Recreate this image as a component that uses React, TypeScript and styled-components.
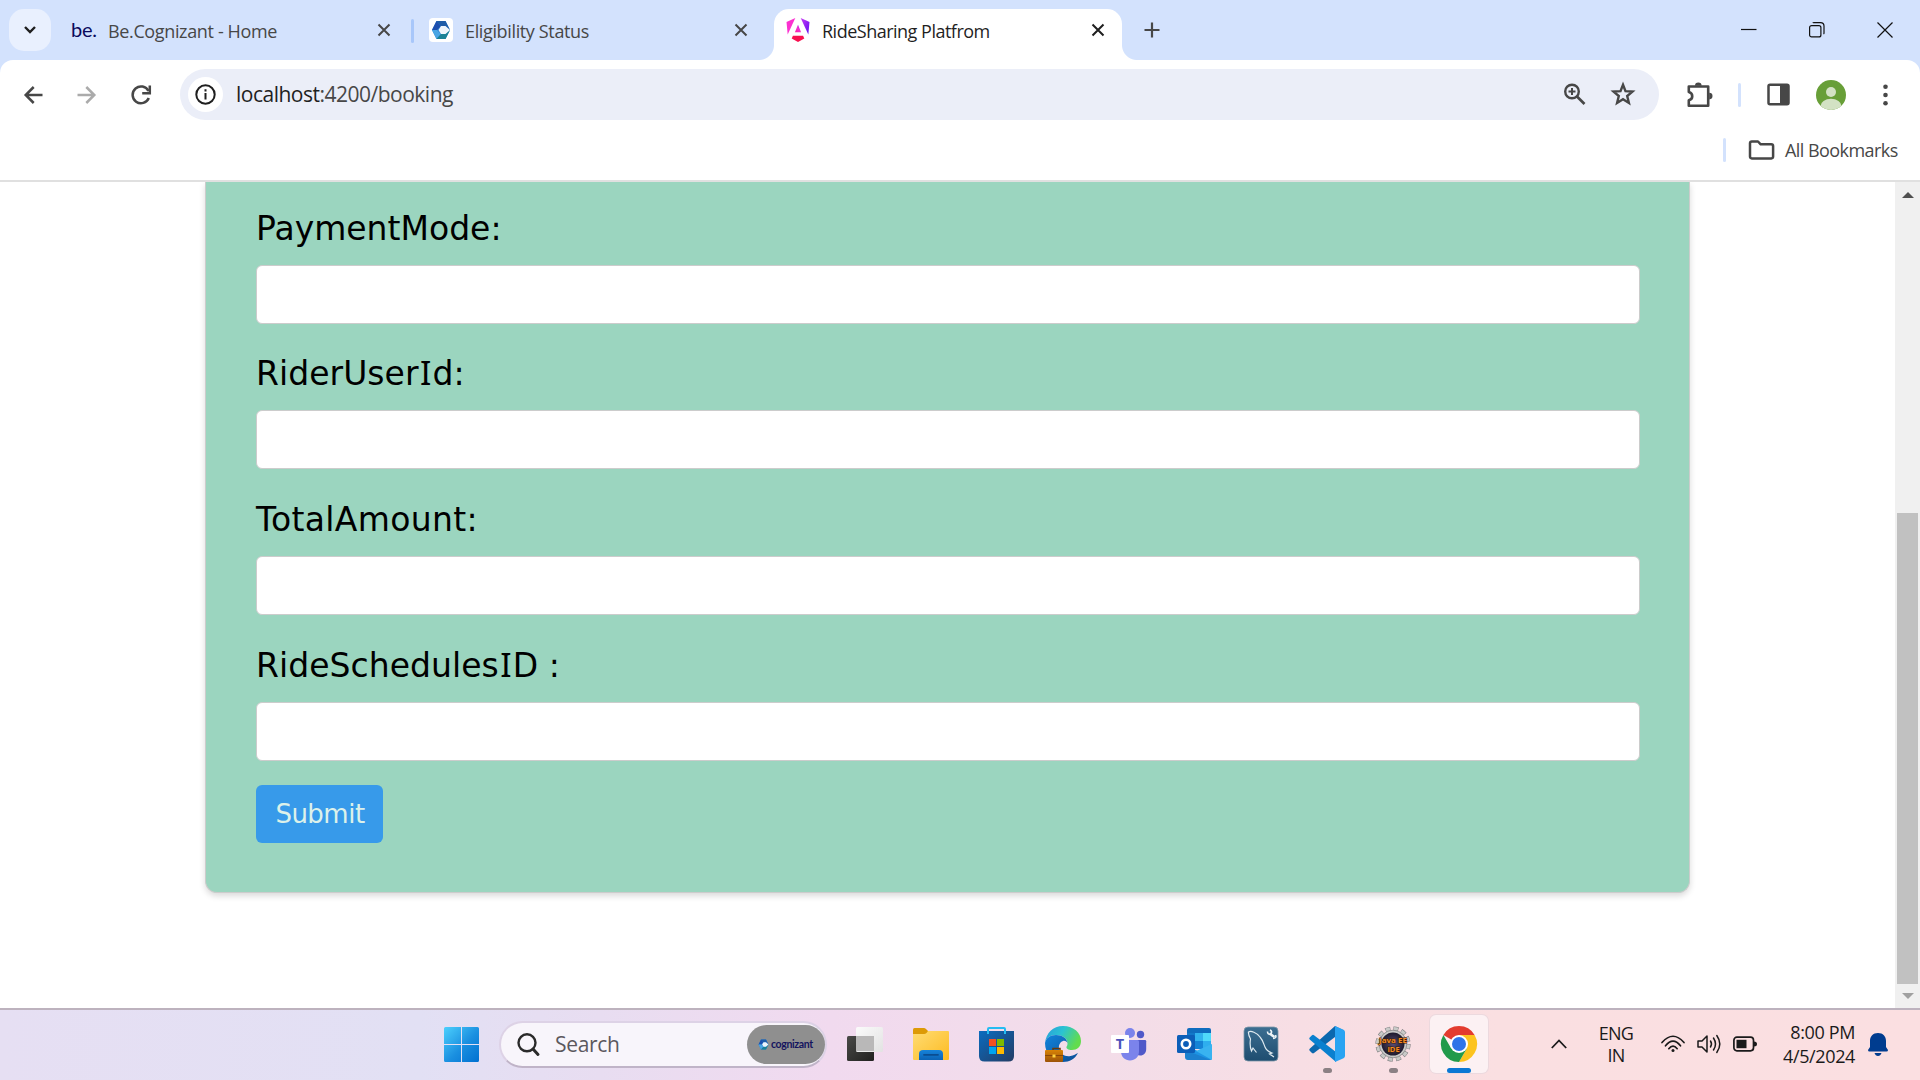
import React from "react";
import styled, { createGlobalStyle } from "styled-components";

const uiFont = `"Open Sans", "Noto Sans", sans-serif`;

const GlobalStyle = createGlobalStyle`
  * { box-sizing: border-box; }
  html, body { margin: 0; padding: 0; overflow: hidden; background: #fff; }
  svg { display: block; flex: none; overflow: visible; }
`;

const Screen = styled.div`
  width: 1920px;
  height: 1080px;
  display: flex;
  flex-direction: column;
  overflow: hidden;
  font-family: ${uiFont};
  background: #fff;
`;

/* ---------- Browser frame ---------- */

const TabStrip = styled.header`
  height: 60px;
  flex: none;
  display: flex;
  align-items: flex-start;
  padding: 9px 27px 0 9px;
  background: #d3e2fd;
`;

const TabSearch = styled.div`
  width: 42px;
  height: 42px;
  border-radius: 15px;
  background: #e9f0fe;
  display: grid;
  place-items: center;
`;

const Tab = styled.div<{ $width: number; $active?: boolean; $pad: number; $end: number }>`
  position: relative;
  width: ${(p) => p.$width}px;
  height: 51px;
  padding: 0 ${(p) => p.$end}px 9px ${(p) => p.$pad}px;
  display: flex;
  align-items: center;
  border-radius: 15px 15px 0 0;
  background: ${(p) => (p.$active ? "#fff" : "transparent")};
  color: ${(p) => (p.$active ? "#1f1f1f" : "#474747")};

  &::before,
  &::after {
    content: "";
    display: ${(p) => (p.$active ? "block" : "none")};
    position: absolute;
    bottom: 0;
    width: 15px;
    height: 15px;
  }
  &::before {
    left: -15px;
    background: radial-gradient(circle at 0 0, transparent 14.5px, #fff 15.5px);
  }
  &::after {
    right: -15px;
    background: radial-gradient(circle at 100% 0, transparent 14.5px, #fff 15.5px);
  }
`;

const TabTitle = styled.span<{ $gap: number; $track: number }>`
  flex: 1;
  margin-left: ${(p) => p.$gap}px;
  padding-top: 1px;
  font-size: 18px;
  line-height: 24px;
  letter-spacing: ${(p) => p.$track}px;
  white-space: nowrap;
`;

const BeMark = styled.span`
  width: 26px;
  margin-top: -2px;
  font-family: Lato, sans-serif;
  font-size: 20px;
  line-height: 24px;
  color: #0a0a5c;
  letter-spacing: -0.2px;
`;

const Favicon = styled.span`
  width: 24px;
  height: 24px;
  border-radius: 4px;
  background: #fff;
  display: grid;
  place-items: center;
`;

const Divider = styled.i<{ $color?: string }>`
  flex: none;
  width: 3px;
  height: 24px;
  border-radius: 2px;
  background: ${(p) => p.$color ?? "#d3e2fd"};
`;

const TabDivider = styled(Divider)`
  margin-top: 10px;
`;

const NewTab = styled.div`
  margin: 13px 0 0 22px;
`;

const WindowControls = styled.div`
  margin: 12px 0 0 auto;
  display: flex;
  gap: 52px;
  padding-top: 1px;
`;

const ToolbarWrap = styled.div`
  flex: none;
  background: #d3e2fd;
`;

const Toolbar = styled.div`
  height: 69px;
  border-radius: 13px 13px 0 0;
  background: #fff;
  display: flex;
  align-items: center;
  padding: 0 21px 0 21px;
`;

const NavButtons = styled.div`
  display: flex;
  gap: 30px;
  width: 159px;
`;

const AddressBar = styled.div`
  width: 1479px;
  height: 51px;
  border-radius: 26px;
  background: #ebeef8;
  display: flex;
  align-items: center;
  padding: 0 24px 0 8px;
`;

const InfoBadge = styled.span`
  width: 35px;
  height: 35px;
  border-radius: 50%;
  background: #fff;
  display: grid;
  place-items: center;
`;

const Url = styled.span`
  flex: 1;
  margin-left: 13px;
  margin-top: -1px;
  font-size: 21px;
  line-height: 30px;
  letter-spacing: -0.5px;
  color: #474747;
  b { font-weight: 400; color: #1f1f1f; }
`;

const AddressActions = styled.div`
  display: flex;
  align-items: center;
  gap: 25px;
  padding-bottom: 1px;
`;

const ToolbarActions = styled.div`
  flex: 1;
  display: flex;
  align-items: center;
  margin-left: 28px;
  gap: 26px;
`;

const MenuSlot = styled.span`
  margin-left: 11px;
`;

const BookmarkBar = styled.div`
  flex: none;
  height: 53px;
  border-bottom: 2px solid #e0e0e0;
  display: flex;
  align-items: center;
  justify-content: flex-end;
  padding: 0 21px 9px 0;
`;

const BookmarkLabel = styled.span`
  width: 114px;
  margin-left: 10px;
  font-size: 18px;
  line-height: 24px;
  letter-spacing: -0.55px;
  color: #474747;
  white-space: nowrap;
`;

const FolderSlot = styled.span`
  margin-left: 22px;
`;

/* ---------- Page ---------- */

const Viewport = styled.main`
  flex: none;
  height: 826px;
  display: flex;
  overflow: hidden;
`;

const Page = styled.div`
  flex: 1;
  padding: 0 205px;
  overflow: hidden;
`;

const FormCard = styled.form`
  height: 711px;
  padding: 22.8px 49px 0 50px;
  border: 1px solid #ccc;
  border-top: 0;
  border-radius: 0 0 12px 12px;
  background: #9bd5bf;
  box-shadow: 0 3px 6px rgba(0, 0, 0, 0.15);
`;

const Field = styled.label`
  display: block;
  height: 145.67px;
`;

const FieldLabel = styled.span<{ $track: number }>`
  display: block;
  height: 60px;
  padding-top: 1px;
  font-family: "DejaVu Sans", sans-serif;
  font-size: 33px;
  line-height: 46px;
  letter-spacing: ${(p) => p.$track}px;
  white-space: pre;
  color: #000;
`;

const SerifCapital = styled.span`
  padding: 0 1.3px;
  font-family: "Noto Sans", sans-serif;
  line-height: 1;
  font-size: 33.5px;
`;

const Input = styled.input`
  display: block;
  width: 100%;
  height: 59px;
  border: 1px solid #ccc;
  border-radius: 6px;
  background: #fff;
  outline: none;
`;

const Submit = styled.button`
  display: block;
  width: 127px;
  height: 58px;
  margin-top: -2.6px;
  padding: 0 0 0 1px;
  border: 0;
  border-radius: 6px;
  background: #379aea;
  color: #dcf1ea;
  font-family: "DejaVu Sans", sans-serif;
  font-size: 26px;
  letter-spacing: -0.5px;
`;

const Scrollbar = styled.aside`
  width: 25px;
  background: #f0f0f0;
  display: flex;
  flex-direction: column;
  align-items: center;
  padding: 10px 0 9px;
`;

const Thumb = styled.div`
  width: 21px;
  height: 471px;
  margin: 315px 0 9px;
  background: #c1c1c1;
`;

/* ---------- Taskbar ---------- */

const Taskbar = styled.footer`
  flex: none;
  height: 72px;
  border-top: 2px solid #bdb2be;
  display: flex;
  align-items: center;
  padding: 0 0 2px 444px;
  background: linear-gradient(90deg, #e6dff3 0, #e2e0f4 420px, #e8ddf1 600px, #f1daef 830px, #f3dde9 1100px, #f7dee4 1300px, #fadfe1 1500px, #fbdfe1 1920px);
`;

const SearchBox = styled.div`
  width: 328px;
  height: 47px;
  margin-left: 20px;
  margin-right: 5px;
  border: 2px solid #ddd2e6;
  border-bottom-color: #c0b4c8;
  border-radius: 24px;
  background: #f8f5fb;
  display: flex;
  align-items: center;
  padding: 0 0 0 16px;
`;

const SearchText = styled.span`
  flex: 1;
  margin-left: 16px;
  font-size: 21px;
  line-height: 30px;
  letter-spacing: -0.3px;
  color: #5b585e;
`;

const BrandPill = styled.div`
  width: 78px;
  height: 39px;
  border-radius: 20px;
  background: #8f8f8f;
  display: flex;
  align-items: center;
  padding-left: 11px;
  gap: 2px;
  font-family: Lato, sans-serif;
  font-size: 10.5px;
  font-weight: 700;
  line-height: 12px;
  letter-spacing: -0.35px;
  color: #14145e;
`;

const AppCell = styled.div`
  width: 66px;
  height: 68px;
  display: flex;
  flex-direction: column;
  align-items: center;
  padding-top: 5px;
`;

const AppTile = styled.div<{ $active?: boolean }>`
  width: 58px;
  height: 58px;
  flex: none;
  border-radius: 6px;
  display: grid;
  place-items: center;
  background: ${(p) => (p.$active ? "#fcf1f3" : "transparent")};
  box-shadow: ${(p) => (p.$active ? "0 0 0 1px #ecd9de" : "none")};
`;

const Indicator = styled.i<{ $active?: boolean }>`
  z-index: 1;
  width: ${(p) => (p.$active ? 24 : 9)}px;
  height: 5px;
  flex: none;
  margin-top: -5px;
  border-radius: 3px;
  background: ${(p) => (p.$active ? "#0a78d4" : "#8b8084")};
`;

const Tray = styled.div`
  flex: 1;
  display: flex;
  align-items: center;
  padding-left: 59px;
  color: #1a1a1a;
  font-size: 18px;
  line-height: 24px;
`;

const Language = styled.div`
  width: 50px;
  margin-left: 24px;
  text-align: center;
  line-height: 22px;
  letter-spacing: -0.7px;
`;

const StatusIcons = styled.div`
  margin-left: 20px;
  display: flex;
  align-items: center;
  gap: 12px;
`;

const Clock = styled.div`
  width: 98px;
  text-align: right;
  letter-spacing: -0.38px;
  white-space: nowrap;
`;

const BellSlot = styled.div`
  margin-left: 13px;
`;

/* ---------- Icons ---------- */

const CloseIcon = ({ color = "#474747" }: { color?: string }) => (
  <svg width="12" height="12" viewBox="0 0 12 12" stroke={color} strokeWidth="2">
    <path d="M0.5 0.5 11.5 11.5M11.5 0.5 0.5 11.5" />
  </svg>
);

const HexLogo = ({ size = 20 }: { size?: number }) => (
  <svg width={size} height={size} viewBox="0 0 20 20">
    <path d="M5.500 1h9L19 10l-4.500 9h-9L1 10z" fill="#2a7fd0" />
    <path d="M5.500 1 1 10h5l4-4z" fill="#1d4fae" />
    <path d="M1 10l4.500 9L10 14l-4-4z" fill="#4aa6e4" />
    <path d="M5.500 1h9L19 10l-5-4h-4z" fill="#1f5da8" />
    <path d="M5.500 19h9L19 10l-5 4h-4z" fill="#1a8296" />
    <path d="M10 6h4.500l4.500 4-4.500 4H10l-2.500-4z" fill="#fff" fillOpacity=".92" />
  </svg>
);

const AngularIcon = () => (
  <svg width="24" height="24" viewBox="0 0 24 24">
    <defs>
      <linearGradient id="ngA" x1="0" y1="1" x2="1" y2="0">
        <stop offset="0" stopColor="#fb1e9d" />
        <stop offset=".5" stopColor="#f62fd0" />
        <stop offset="1" stopColor="#7a12f5" />
      </linearGradient>
      <linearGradient id="ngB" x1="0" y1="0" x2="1" y2="1">
        <stop offset="0" stopColor="#c83cf5" />
        <stop offset="1" stopColor="#5d0cf0" />
      </linearGradient>
    </defs>
    <path d="M9.3 0 .5 3.9 1.7 16.5z" fill="#fb30d0" />
    <path d="M14.7 0 23.5 3.9 22.3 16.5z" fill="url(#ngB)" />
    <path d="M12 6.8 8.9 14.3H15.1z" fill="url(#ngA)" />
    <path d="M6.9 17.8h10.2l1.2 2.8L12 24l-6.3-3.4z" fill="#f8104f" />
  </svg>
);

const BackIcon = ({ color, flip }: { color: string; flip?: boolean }) => (
  <svg width="24" height="24" viewBox="0 0 24 24" fill="none" stroke={color} strokeWidth="2.5">
    <path transform={flip ? "translate(24 0) scale(-1 1)" : undefined} d="M21.5 12H5M12.7 4 4.7 12l8 8" />
  </svg>
);

const ReloadIcon = () => (
  <svg width="24" height="24" viewBox="0 0 24 24" fill="none" stroke="#474747" strokeWidth="2.5">
    <path d="M19.8 15A8.4 8.4 0 1 1 19.5 8" />
    <path d="M20.8 2.5v7.7h-7.6" />
  </svg>
);

const InfoIcon = () => (
  <svg width="21" height="21" viewBox="0 0 21 21" fill="none" stroke="#1f1f1f" strokeWidth="2">
    <circle cx="10.5" cy="10.5" r="9.2" />
    <path d="M10.5 9v6.5M10.5 5.3v2.2" />
  </svg>
);

const ZoomIcon = () => (
  <svg width="23" height="23" viewBox="0 0 23 23" fill="none" stroke="#474747" strokeWidth="2.4">
    <circle cx="9" cy="8.5" r="6.8" />
    <path d="M14 13.5l7.5 7.5" strokeWidth="2.7" />
    <path d="M9 5v7M5.5 8.5h7" strokeWidth="2" />
  </svg>
);

const StarIcon = () => (
  <svg width="24" height="24" viewBox="0 0 24 24" fill="none" stroke="#474747" strokeWidth="2.4">
    <path d="M12 2.8l2.5 6.3 7 .5-5.3 4.4 1.7 6.9L12 17.2l-5.9 3.7 1.7-6.9L2.5 9.6l7-.5z" />
  </svg>
);

const PuzzleIcon = () => (
  <svg width="25" height="26" viewBox="0 0 25 26" fill="none" stroke="#474747" strokeWidth="2.6" strokeLinejoin="round">
    <path d="M1.800 4.500h19.400v19.200H1.800V18.300c4.600-1.200 4.600-7 0-8.200z" />
    <path d="M8 3.700a3.300 3.300 0 0 1 6.600 0zM22.200 10.800a3.300 3.300 0 0 1 0 6.600z" fill="#474747" stroke="none" />
  </svg>
);

const PanelIcon = () => (
  <svg width="23" height="23" viewBox="0 0 23 23">
    <rect x="1.5" y="1.8" width="20" height="19.4" rx="1.5" fill="none" stroke="#474747" strokeWidth="2.5" />
    <path d="M13 2h9v19h-9z" fill="#474747" />
  </svg>
);

const AvatarIcon = () => (
  <svg width="30" height="30" viewBox="0 0 30 30">
    <defs>
      <clipPath id="avatarClip"><circle cx="15" cy="15" r="15" /></clipPath>
    </defs>
    <g clipPath="url(#avatarClip)">
      <rect width="30" height="30" fill="#689f38" />
      <circle cx="15" cy="12" r="5" fill="#d3e2c4" />
      <ellipse cx="15" cy="26" rx="10.5" ry="7.2" fill="#d3e2c4" />
    </g>
  </svg>
);

const DotsIcon = () => (
  <svg width="5" height="22" viewBox="0 0 5 22" fill="#474747">
    <circle cx="2.5" cy="2.8" r="2.3" />
    <circle cx="2.5" cy="11" r="2.3" />
    <circle cx="2.5" cy="19.2" r="2.3" />
  </svg>
);

const FolderIcon = () => (
  <svg width="27" height="20" viewBox="0 0 27 20" fill="none" stroke="#474747" strokeWidth="2.5" strokeLinejoin="round">
    <path d="M2 3.3Q2 1.5 3.8 1.5H10l2.7 2.8h10.6q1.8 0 1.8 1.8v10.5q0 1.8-1.8 1.8H3.8Q2 18.400 2 16.600z" />
  </svg>
);

const WindowsIcon = () => (
  <svg width="35" height="35" viewBox="0 0 35 35">
    <defs>
      <linearGradient id="winG" x1="0" y1="0" x2="1" y2="1">
        <stop offset="0" stopColor="#4cd0fd" />
        <stop offset=".55" stopColor="#1a8fe0" />
        <stop offset="1" stopColor="#0070d0" />
      </linearGradient>
    </defs>
    <path d="M1.500 0H17v17H0V1.500Q0 0 1.500 0zM18 0h15.500Q35 0 35 1.500V17H18zM0 18h17v17H1.500Q0 35 0 33.500zM18 18h17v15.500Q35 35 33.500 35H18z" fill="url(#winG)" />
  </svg>
);

const SearchIcon = () => (
  <svg width="22" height="23" viewBox="0 0 22 23" fill="none" stroke="#2a2a2a" strokeWidth="2.4">
    <circle cx="10" cy="9.800" r="8.500" />
    <path d="M16 16l5 5.500" strokeWidth="3" strokeLinecap="round" />
  </svg>
);

const TaskViewIcon = () => (
  <svg width="36" height="36" viewBox="0 0 36 36">
    <defs>
      <linearGradient id="tvD" x1="0" y1="0" x2="1" y2="1">
        <stop offset="0" stopColor="#4a4a48" />
        <stop offset="1" stopColor="#20201e" />
      </linearGradient>
      <linearGradient id="tvL" x1="0" y1="0" x2="1" y2="1">
        <stop offset="0" stopColor="#fbfbfb" />
        <stop offset="1" stopColor="#e2e2e2" />
      </linearGradient>
    </defs>
    <rect y="10" width="27" height="25" rx="1.500" fill="url(#tvD)" />
    <rect x="9" y="1" width="27" height="25" rx="1.500" fill="url(#tvL)" />
    <path d="M9 10h18v15H9z" fill="#b9b8b8" />
  </svg>
);

const ExplorerIcon = () => (
  <svg width="36" height="36" viewBox="0 0 36 36">
    <defs>
      <linearGradient id="feY" x1="0" y1="0" x2="1" y2="1">
        <stop offset="0" stopColor="#ffdc73" />
        <stop offset="1" stopColor="#fdbb22" />
      </linearGradient>
      <linearGradient id="feB" x1="0" y1="0" x2="0" y2="1">
        <stop offset="0" stopColor="#1683da" />
        <stop offset="1" stopColor="#0b63b5" />
      </linearGradient>
    </defs>
    <path d="M0 3.500Q0 2 1.500 2H11q1 0 2 1l2.500 2.500V9H0z" fill="#dd9a06" />
    <path d="M0 8h11q1.500 0 2.500-1l1.500-2h20q1 0 1 1v27q0 1-1 1H1q-1 0-1-1z" fill="url(#feY)" />
    <path d="M6 34v-6q0-4 4-4h16q4 0 4 4v6z" fill="url(#feB)" />
    <path d="M11 28.800h14" stroke="#0a4d91" strokeWidth="1.800" strokeLinecap="round" />
  </svg>
);

const StoreIcon = () => (
  <svg width="36" height="36" viewBox="0 0 36 36">
    <defs>
      <linearGradient id="stG" x1="0" y1="0" x2="1" y2="1">
        <stop offset="0" stopColor="#0a6cc0" />
        <stop offset="1" stopColor="#243c64" />
      </linearGradient>
    </defs>
    <path d="M0 5h35v25q0 5.500-5.500 5.500h-24Q0 35.500 0 30z" fill="url(#stG)" />
    <path d="M9 8V3q0-1 1-1h15q1 0 1 1v5" fill="none" stroke="#25bcf2" strokeWidth="2" />
    <path d="M10 13h7v7h-7z" fill="#f25022" />
    <path d="M18 13h7v7h-7z" fill="#7fba00" />
    <path d="M10 21h7v7h-7z" fill="#00a4ef" />
    <path d="M18 21h7v7h-7z" fill="#ffb900" />
  </svg>
);

const EdgeIcon = () => (
  <svg width="36" height="36" viewBox="0 0 36 36">
    <defs>
      <linearGradient id="egT" x1="0" y1="0" x2="1" y2=".4">
        <stop offset="0" stopColor="#279cdc" />
        <stop offset=".5" stopColor="#2bc3d2" />
        <stop offset="1" stopColor="#62dc4e" />
      </linearGradient>
      <linearGradient id="egB" x1="0" y1="0" x2="1" y2="1">
        <stop offset="0" stopColor="#1184dc" />
        <stop offset="1" stopColor="#0c4c94" />
      </linearGradient>
      <linearGradient id="egC" x1="0" y1="0" x2="0" y2="1">
        <stop offset="0" stopColor="#d88306" />
        <stop offset="1" stopColor="#9d5308" />
      </linearGradient>
    </defs>
    <path d="M0 17C1 7 8 0 18 0c11 0 18 7 18 15 0 6-4 9-9 9-4 0-6-1.500-5.500-3 .3-1 1-1.500 1-3.500C22.500 12 17 9 11 9 5 9 1 12 0 17z" fill="url(#egT)" />
    <path d="M0 17C1 12 5 9 11 9c6 0 11 3 11.500 8-1-2-3-2.500-4.500-2-3 1-4.500 4-4 8 1 5 6 8 11.500 7 3-.5 5.500-2 7.500-3C30 33 24.500 36 18 36 8 36 0 28 0 17z" fill="url(#egB)" />
    <path d="M8 24v-1.500h7V24" stroke="#6a3a08" strokeWidth="1.500" fill="none" />
    <rect y="24" width="18" height="12" rx="1" fill="url(#egC)" />
    <path d="M0 29.500h18" stroke="#8a4606" />
    <rect x="7.500" y="28.500" width="3" height="3" fill="#ffd23e" />
  </svg>
);

const IconLetter = styled.text`
  font-family: "Open Sans", sans-serif;
  font-weight: 700;
`;

const TeamsIcon = () => (
  <svg width="36" height="36" viewBox="0 0 36 36">
    <circle cx="19" cy="7" r="5" fill="#7b83eb" />
    <circle cx="29.500" cy="8.500" r="3.700" fill="#5059c9" />
    <path d="M23 14h11q1.200 0 1.200 1.200V23c0 4-2.500 6.500-6 6.500-3 0-5-1.500-6.200-4z" fill="#5059c9" />
    <path d="M10 14h16.500q1.500 0 1.500 1.500V25c0 6-4 9.500-9 9.500S10 31 10 25z" fill="#7b83eb" />
    <rect y="9" width="18" height="18" rx="1" fill="#fff" />
    <IconLetter x="9" y="23" textAnchor="middle" fontSize="14.500" fill="#4b53bc">T</IconLetter>
  </svg>
);

const OutlookIcon = () => (
  <svg width="36" height="36" viewBox="0 0 36 36">
    <path d="M10 4q0-2 2-2h20q2 0 2 2v16H10z" fill="#0f6cbe" />
    <path d="M10 7h8v8h-8z" fill="#1277c8" />
    <path d="M18 7h8v8h-8zM10 15h8v8h-8z" fill="#31b2ee" />
    <path d="M26 7h8v8h-8z" fill="#4fdafa" />
    <path d="M18 15h8v8h-8z" fill="#1583d6" />
    <path d="M26 15h8v8h-8z" fill="#2eaeee" />
    <path d="M35 17v3L23 26l-13-6v12q0 2 2 2h21q2 0 2-2z" fill="#1d94e4" />
    <path d="M35 18v16L19 25z" fill="#39b3f0" />
    <path d="M8 24 34 34H11q-3 0-3-3z" fill="#1b80cf" />
    <rect y="9" width="18" height="18" rx="1.500" fill="#0c5eb8" />
    <circle cx="9" cy="18" r="4.200" fill="none" stroke="#fff" strokeWidth="2.600" />
  </svg>
);

const MysqlIcon = () => (
  <svg width="36" height="36" viewBox="0 0 36 36">
    <defs>
      <linearGradient id="mqG" x1="0" y1="0" x2="0" y2="1">
        <stop offset="0" stopColor="#3c6e91" />
        <stop offset="1" stopColor="#1e4d70" />
      </linearGradient>
    </defs>
    <rect x="1" y="1" width="34" height="34" rx="4" fill="url(#mqG)" stroke="#7d97a8" strokeWidth=".8" />
    <path d="M13.500 26.500 10 22l-1.500 3C6.500 20 7 16 7.500 13 6 10 5 8 5.500 6c2.500-1.500 8 .5 11.500 5 3 3.500 3.500 6.500 5 10 1 2.500 3 4.500 7 6l-2.500 1 4.500 3" fill="none" stroke="#dfeaf0" strokeWidth="1.200" />
    <path d="M26.500 7.500 31.500 11" fill="none" stroke="#eef4f7" strokeWidth="2.600" />
    <path d="M24.500 5.500q0 3.500 3.500 2.500 1.500-3-1-4M30 12.500q4-.5 2.500-3.500" fill="none" stroke="#eef4f7" strokeWidth="1.600" />
  </svg>
);

const CodeIcon = () => (
  <svg width="36" height="36" viewBox="0 0 36 36">
    <path d="M26 0 35 4.500 26 11 5 27q-1 .8-2 0l-2.300-2.200q-1-1 0-2z" fill="#0b68ae" />
    <path d="M3 9.200q1-.8 2 0L27 26v10L.7 13.500q-1-1 0-2z" fill="#0a80cf" />
    <path d="M26 0l8.500 3.800q1.500.7 1.500 2.200v24q0 1.500-1.500 2.200L26 36z" fill="#29a3f2" />
  </svg>
);

const GearIcon = () => (
  <svg width="36" height="36" viewBox="0 0 36 36">
    <defs>
      <radialGradient id="grG">
        <stop offset="0" stopColor="#574c74" />
        <stop offset="1" stopColor="#1e1a2c" />
      </radialGradient>
    </defs>
    <circle cx="18" cy="18" r="15.400" fill="none" stroke="#77787a" strokeWidth="4.400" strokeDasharray="4.900 3.164" />
    <circle cx="18" cy="18" r="15.400" fill="none" stroke="#c9cac8" strokeWidth="3.400" strokeDasharray="4.100 3.964" strokeDashoffset="-.4" />
    <circle cx="18" cy="18" r="13.800" fill="#c9cac8" stroke="#888" strokeWidth=".8" />
    <circle cx="18" cy="18" r="11.500" fill="url(#grG)" />
    <IconLetter x="18" y="16.500" textAnchor="middle" fontSize="7.500" fill="#f28a22" stroke="#3a1d08" strokeWidth="1" paintOrder="stroke" textLength="28" lengthAdjust="spacingAndGlyphs">Java EE</IconLetter>
    <IconLetter x="18.500" y="25.500" textAnchor="middle" fontSize="7.500" fill="#f28a22" stroke="#3a1d08" strokeWidth="1" paintOrder="stroke">IDE</IconLetter>
  </svg>
);

const ChromeIcon = () => (
  <svg width="36" height="36" viewBox="0 0 36 36">
    <path d="M18 18 2.400 9A18 18 0 0 1 33.600 9z" fill="#e33b2e" />
    <path d="M18 9h15.600A18 18 0 0 1 18 36l7.800-13.500z" fill="#fcc31e" />
    <path d="M10.200 22.500 2.400 9A18 18 0 0 0 18 36l7.800-13.500z" fill="#219a4b" />
    <circle cx="18" cy="18" r="9" fill="#fff" />
    <circle cx="18" cy="18" r="7" fill="#2f74e8" />
  </svg>
);

const WifiIcon = () => (
  <svg width="24" height="18" viewBox="0 0 24 18" fill="none" stroke="#1a1a1a" strokeWidth="1.700" strokeLinecap="round">
    <path d="M1 7.500Q12-5 23 7.500M4.500 10.800Q12 1.500 19.500 10.800M7.800 13.700Q12 8.500 16.200 13.700" />
    <circle cx="12" cy="15.500" r="1.500" fill="#1a1a1a" stroke="none" />
  </svg>
);

const VolumeIcon = () => (
  <svg width="24" height="20" viewBox="0 0 24 20" fill="none" stroke="#1a1a1a" strokeWidth="1.500" strokeLinecap="round" strokeLinejoin="round">
    <path d="M1 7h4l5-5v16l-5-5H1zM13.500 7q2 3 0 6M16.500 4q4 6 0 12M19.800 1.500q6 8.500 0 17" />
  </svg>
);

const BatteryIcon = () => (
  <svg width="24" height="16" viewBox="0 0 24 16">
    <rect x=".9" y="1.200" width="19.600" height="13.600" rx="3" fill="none" stroke="#1a1a1a" strokeWidth="1.700" />
    <rect x="3.500" y="3.800" width="10" height="8.400" fill="#1a1a1a" />
    <path d="M21 5.500q3 0 3 2.500t-3 2.500z" fill="#1a1a1a" />
  </svg>
);

const BellIcon = () => (
  <svg width="20" height="23" viewBox="0 0 20 23" fill="#003c8f">
    <path d="M10 0c5 0 8 3.500 8 8v6l2 3q0 1.500-1.500 1.500h-17Q0 18.500 0 17l2-3V8c0-4.500 3-8 8-8zM6.500 20h7q-1 3-3.500 3t-3.500-3z" />
  </svg>
);

/* ---------- Data ---------- */

const fields = [
  { label: "PaymentMode:", name: "paymentMode", track: 0 },
  { label: "RiderUserId:", name: "riderUserId", track: 0.05 },
  { label: "TotalAmount:", name: "totalAmount", track: 0.35 },
  { label: "RideSchedulesID :", name: "rideSchedulesId", track: 0.05 },
];

const renderLabel = (label: string) =>
  label.split(/(I)/).map((part, i) => (part === "I" ? <SerifCapital key={i}>I</SerifCapital> : part));

const apps: { name: string; Icon: React.FC; running?: boolean; active?: boolean }[] = [
  { name: "taskview", Icon: TaskViewIcon },
  { name: "explorer", Icon: ExplorerIcon },
  { name: "store", Icon: StoreIcon },
  { name: "edge", Icon: EdgeIcon },
  { name: "teams", Icon: TeamsIcon },
  { name: "outlook", Icon: OutlookIcon },
  { name: "mysql", Icon: MysqlIcon },
  { name: "code", Icon: CodeIcon, running: true },
  { name: "eclipse", Icon: GearIcon, running: true },
  { name: "chrome", Icon: ChromeIcon, running: true, active: true },
];

export default function App() {
  return (
    <Screen>
      <GlobalStyle />
      <TabStrip>
        <TabSearch>
          <svg width="12" height="8" viewBox="0 0 12 8" fill="none" stroke="#1f1f1f" strokeWidth="2.4">
            <path d="M1 1l5 5 5-5" />
          </svg>
        </TabSearch>
        <Tab $width={360} $pad={20} $end={21}>
          <BeMark>be.</BeMark>
          <TabTitle $gap={11} $track={-0.36}>Be.Cognizant - Home</TabTitle>
          <CloseIcon />
        </Tab>
        <TabDivider $color="#a8c7fa" />
        <Tab $width={360} $pad={15} $end={27}>
          <Favicon><HexLogo /></Favicon>
          <TabTitle $gap={12} $track={-0.36}>Eligibility Status</TabTitle>
          <CloseIcon />
        </Tab>
        <Tab $width={348} $pad={12} $end={18} $active>
          <AngularIcon />
          <TabTitle $gap={12} $track={-0.5}>RideSharing Platfrom</TabTitle>
          <CloseIcon color="#1f1f1f" />
        </Tab>
        <NewTab>
          <svg width="16" height="16" viewBox="0 0 16 16" stroke="#474747" strokeWidth="2.2">
            <path d="M8 0.500v15M0.500 8h15" />
          </svg>
        </NewTab>
        <WindowControls>
          <svg width="16" height="16" viewBox="0 0 16 16" stroke="#111" strokeWidth="1.200">
            <path d="M0 7.500h15.500" />
          </svg>
          <svg width="16" height="16" viewBox="0 0 16 16" fill="none" stroke="#111" strokeWidth="1.200">
            <rect x=".6" y="3.600" width="11.300" height="11.300" rx="2" />
            <path d="M3.800 1Q4 .6 5 .6h6.500q3.500 0 3.500 3.500v7q0 .7-.5 1" />
          </svg>
          <svg width="16" height="16" viewBox="0 0 16 16" stroke="#111" strokeWidth="1.200">
            <path d="M.5.500l15 15M15.500.500l-15 15" />
          </svg>
        </WindowControls>
      </TabStrip>

      <ToolbarWrap>
        <Toolbar>
          <NavButtons>
            <BackIcon color="#474747" />
            <BackIcon color="#ababab" flip />
            <ReloadIcon />
          </NavButtons>
          <AddressBar>
            <InfoBadge><InfoIcon /></InfoBadge>
            <Url><b>localhost</b>:4200/booking</Url>
            <AddressActions>
              <ZoomIcon />
              <StarIcon />
            </AddressActions>
          </AddressBar>
          <ToolbarActions>
            <PuzzleIcon />
            <Divider />
            <PanelIcon />
            <AvatarIcon />
            <MenuSlot><DotsIcon /></MenuSlot>
          </ToolbarActions>
        </Toolbar>
      </ToolbarWrap>
      <BookmarkBar>
        <Divider />
        <FolderSlot><FolderIcon /></FolderSlot>
        <BookmarkLabel>All Bookmarks</BookmarkLabel>
      </BookmarkBar>

      <Viewport>
        <Page>
          <FormCard>
            {fields.map((f) => (
              <Field key={f.name}>
                <FieldLabel $track={f.track}>{renderLabel(f.label)}</FieldLabel>
                <Input name={f.name} />
              </Field>
            ))}
            <Submit type="button">Submit</Submit>
          </FormCard>
        </Page>
        <Scrollbar>
          <svg width="12" height="6" viewBox="0 0 12 6" fill="#505050"><path d="M6 0l6 6H0z" /></svg>
          <Thumb />
          <svg width="12" height="6" viewBox="0 0 12 6" fill="#a0a0a0"><path d="M0 0h12L6 6z" /></svg>
        </Scrollbar>
      </Viewport>

      <Taskbar>
        <WindowsIcon />
        <SearchBox>
          <SearchIcon />
          <SearchText>Search</SearchText>
          <BrandPill><HexLogo size={11} />cognizant</BrandPill>
        </SearchBox>
        {apps.map(({ name, Icon, running, active }) => (
          <AppCell key={name}>
            <AppTile $active={active}><Icon /></AppTile>
            {running && <Indicator $active={active} />}
          </AppCell>
        ))}
        <Tray>
          <svg width="16" height="10" viewBox="0 0 16 10" fill="none" stroke="#1a1a1a" strokeWidth="1.800">
            <path d="M.8 9 8 1.500 15.200 9" />
          </svg>
          <Language>ENG<br />IN</Language>
          <StatusIcons>
            <WifiIcon />
            <VolumeIcon />
            <BatteryIcon />
          </StatusIcons>
          <Clock>8:00 PM<br />4/5/2024</Clock>
          <BellSlot><BellIcon /></BellSlot>
        </Tray>
      </Taskbar>
    </Screen>
  );
}
